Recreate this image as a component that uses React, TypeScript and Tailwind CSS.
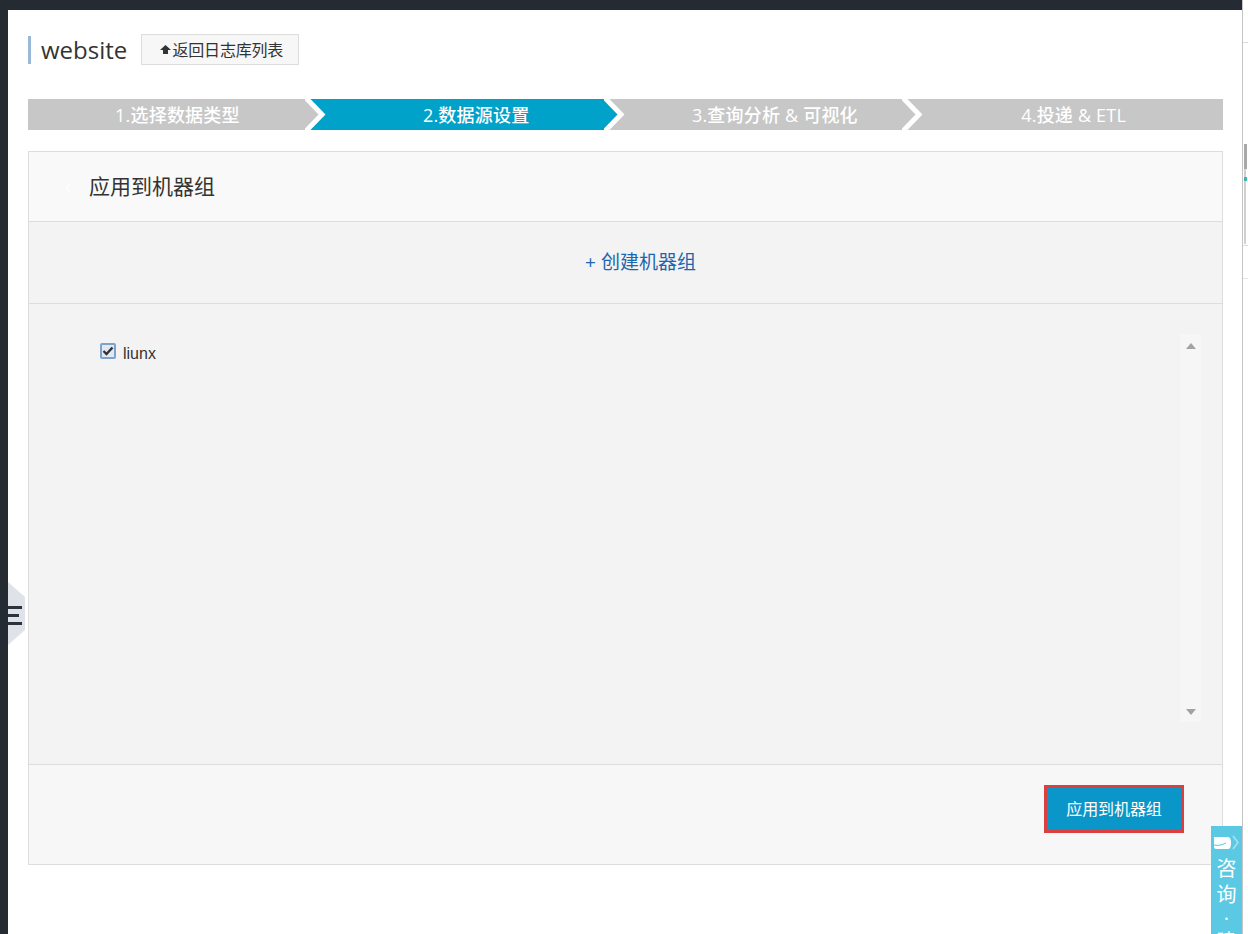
import React from 'react';

const cjk = "font-['Open_Sans','Noto_Sans_CJK_SC',sans-serif]";

const steps = [
  { label: '1.选择数据类型', active: false },
  { label: '2.数据源设置', active: true },
  { label: '3.查询分析 & 可视化', active: false },
  { label: '4.投递 & ETL', active: false },
];

const BLUE = '#00a2ca';
const GRAY = '#c7c7c7';

const StepArrow = ({ current, next }: { current: string; next: string }) => (
  <svg className="absolute right-0 top-0" width="22" height="31" viewBox="0 0 22 31">
    <rect width="22" height="31" fill={next} />
    <polygon points="0,0 16,15.5 0,31" fill={current} />
    <polyline points="0,-2 17,15.5 0,33" fill="none" stroke="#fff" strokeWidth="5" />
  </svg>
);

const StepBar = () => (
  <div className="flex h-[31px] mt-[34px]">
    {steps.map((step, i) => {
      const color = step.active ? BLUE : GRAY;
      const next = steps[i + 1]?.active ? BLUE : GRAY;
      return (
        <div
          key={step.label}
          className={`relative flex-1 flex items-center justify-center pt-[1px] text-white text-[18px] font-medium tracking-[0.2px] ${
            step.active ? 'bg-[#00a2ca]' : 'bg-[#c7c7c7]'
          }`}
        >
          <span>{step.label}</span>
          {i < steps.length - 1 && <StepArrow current={color} next={next} />}
        </div>
      );
    })}
  </div>
);

const FakeScrollbar = () => (
  <div className="w-[21px] h-[388px] bg-[#f6f6f6] flex flex-col items-center justify-between pt-[9px] pb-[7px]">
    <svg width="10" height="6" viewBox="0 0 10 6"><polygon points="5,0 10,6 0,6" fill="#a3a3a3" /></svg>
    <svg width="10" height="6" viewBox="0 0 10 6"><polygon points="0,0 10,0 5,6" fill="#a3a3a3" /></svg>
  </div>
);

const SideToggle = () => (
  <div className="absolute left-[8px] top-[582px] w-[17px] h-[63px] bg-[#dfe2e8] [clip-path:polygon(0_0,100%_24%,100%_76%,0_100%)] flex flex-col justify-center gap-[5px] pt-[3px]">
    <div className="h-[3px] w-[14px] bg-[#2c333b]" />
    <div className="h-[3px] w-[11px] bg-[#2c333b]" />
    <div className="h-[3px] w-[14px] bg-[#2c333b]" />
  </div>
);

const ChatWidget = () => (
  <div className="absolute left-[1211px] top-[826px] w-[31px] h-[108px] bg-[#5bc9e3] overflow-hidden flex flex-col items-center text-white text-[20px] leading-[26px]">
    <div className="h-[16px] mt-[9px] w-full flex items-center pl-[2px]">
      <svg width="19" height="14" viewBox="0 0 19 14"><path d="M1 1h14c2 0 3 2 3 6s-1 6-3 6H3c-1 0-2-1-2-2z" fill="#fff" /><path d="M1 9c4 1 8 0 12-2" stroke="#5bc9e3" fill="none" /></svg>
      <svg width="8" height="15" viewBox="0 0 8 15"><polyline points="1,1 6,7.5 1,14" fill="none" stroke="#a9e2ef" strokeWidth="1.5" /></svg>
    </div>
    <span className="mt-[6px]">咨</span>
    <span>询</span>
    <span className="h-[21px] leading-[22px]">·</span>
    <span>建</span>
  </div>
);

const RightStrip = () => (
  <div className="w-[6px] bg-white border-l border-[#c4c4c4] relative">
    <div className="h-[43px] border-b border-[#ddd]" />
    <div className="ml-[1px] mt-[101px] h-[25px] w-[3px] bg-[#a8a8a8]" />
    <div className="ml-[1px] h-[8px] w-[2px] bg-[#d0d0d0]" />
    <div className="ml-[1px] h-[4px] w-[3px] bg-[#3fb6b0]" />
    <div className="ml-[1px] h-[63px] w-[2px] bg-[#d0d0d0]" />
    <div className="mt-[1px] border-b border-[#ddd]" />
    <div className="h-[33px] border-b border-[#e6e6e6]" />
  </div>
);

export default function App() {
  return (
    <div className={`relative w-[1248px] h-[934px] overflow-hidden bg-white text-[#333] ${cjk}`}>
      <div className="flex h-full">
        <div className="flex-1 flex flex-col min-w-0">
          <div className="h-[10px] bg-[#242b33] shrink-0" />
          <div className="flex flex-1 min-h-0">
            <div className="w-[8px] bg-[#242b33] shrink-0" />
            <div className="flex-1 pl-[20px] pr-[19px] pt-[24px] min-w-0">
              {/* Title */}
              <div className="flex items-center h-[31px]">
                <div className="flex items-center h-[28px] border-l-[3px] border-[#9ab9d8] pl-[10px] text-[24px] text-[#333] leading-none">
                  website
                </div>
                <button className="ml-[14px] h-[31px] w-[158px] flex items-center justify-center pl-[3px] bg-[#f7f7f7] border border-[#ddd] text-[16px] tracking-[-0.2px] text-[#333]">
                  <svg width="11" height="10" viewBox="0 0 11 10" className="mr-[1px]">
                    <path d="M5.5 0 11 5H8v4H3V5H0z" fill="#333" />
                  </svg>
                  返回日志库列表
                </button>
              </div>

              <StepBar />

              {/* Panel */}
              <div className="mt-[21px] border border-[#ddd] h-[714px] flex flex-col">
                <div className="h-[70px] bg-[#f9f9f9] border-b border-[#ddd] flex items-center pl-[36px] pt-[1px] text-[21px] shrink-0">
                  <span className="w-[24px] text-white text-[20px]">‹</span>
                  <span>应用到机器组</span>
                </div>
                <div className="h-[82px] bg-[#f3f3f3] border-b border-[#ddd] flex items-center justify-center pl-[30px] text-[19px] text-[#1e65ae] shrink-0">
                  + 创建机器组
                </div>
                <div className="flex-1 bg-[#f3f3f3] border-b border-[#ddd] flex justify-between pt-[30px] pl-[71px] pr-[21px]">
                  <label className="flex items-start mt-[9px] h-[20px]">
                    <span className="w-[16px] h-[16px] border-2 border-[#7da2ce] rounded-[2px] bg-[#e3e8ef] flex items-center justify-center">
                      <svg width="12" height="10" viewBox="0 0 12 10">
                        <polyline points="1.5,5 4.5,8 10.5,1.5" fill="none" stroke="#2c333b" strokeWidth="2.4" />
                      </svg>
                    </span>
                    <span className="ml-[7px] mt-[1px] text-[16px] leading-[20px] text-[#333] font-['Liberation_Sans',sans-serif]">liunx</span>
                  </label>
                  <FakeScrollbar />
                </div>
                <div className="h-[99px] bg-[#f7f7f7] flex justify-end items-start pt-[20px] pr-[38px] shrink-0">
                  <button className="w-[140px] h-[48px] border-[3px] border-[#d9403f] bg-[#0a96c8] text-white text-[16px] tracking-[-0.1px]">
                    应用到机器组
                  </button>
                </div>
              </div>
            </div>
          </div>
        </div>
        <RightStrip />
      </div>
      <SideToggle />
      <ChatWidget />
    </div>
  );
}
